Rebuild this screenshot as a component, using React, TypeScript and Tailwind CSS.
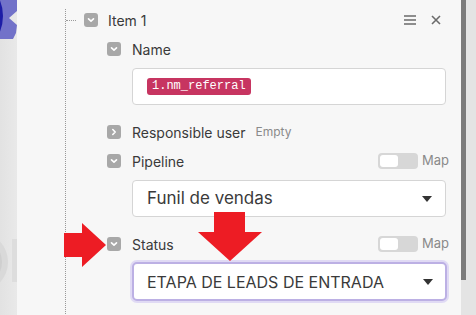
import React from "react";

const Chevron: React.FC<{ open?: boolean }> = ({ open = true }) => (
  <div className="w-[14px] h-[14px] rounded-[3px] bg-[#a8a8a8] flex items-center justify-center shrink-0">
    <svg width="8" height="8" viewBox="0 0 8 8" fill="none">
      {open ? (
        <path d="M1.5 2.8 L4 5.2 L6.5 2.8" stroke="white" strokeWidth="1.6" strokeLinecap="round" strokeLinejoin="round" />
      ) : (
        <path d="M2.8 1.5 L5.2 4 L2.8 6.5" stroke="white" strokeWidth="1.6" strokeLinecap="round" strokeLinejoin="round" />
      )}
    </svg>
  </div>
);

const MapToggle: React.FC = () => (
  <div className="ml-auto flex items-center gap-[4px]">
    <div className="w-[40px] h-[16px] rounded-[4px] bg-[#d7d7d7] p-[2px] flex">
      <div className="w-[18px] h-[12px] rounded-[3px] bg-white" />
    </div>
    <span className="text-[13px] text-[#8a8a8a] w-[24px]">Map</span>
  </div>
);

const Caret: React.FC = () => (
  <svg width="10" height="6" viewBox="0 0 10 6" className="ml-auto">
    <path d="M0 0 H10 L5 6 Z" fill="#333" />
  </svg>
);

const App: React.FC = () => {
  return (
    <div
      className="relative w-[476px] h-[315px] overflow-hidden flex bg-[#e4e4e4] text-[#3a3a3a]"
      style={{ fontFamily: "Inter, 'Noto Sans', sans-serif" }}
    >
      {/* left strip with module bubbles */}
      <div className="w-[17px] h-full bg-gradient-to-r from-[#e2e2e2] to-[#e9e9e9] shrink-0">
        <svg width="17" height="315" viewBox="0 0 17 315">
          <path d="M-40 -10 L17 -10 L17 11 L9 18 L17 25 L16 33 L13 39 L-40 39 Z" fill="#7272c9" />
          <circle cx="-40" cy="16" r="43" fill="#1d1da6" />
          <circle cx="-22" cy="262" r="30" fill="#d9d9d9" />
          <circle cx="-22" cy="262" r="24" fill="#cfcfcf" />
          <rect x="12" y="239" width="5" height="43" fill="#dddddd" />
        </svg>
      </div>

      {/* panel */}
      <div className="flex-1 h-full bg-[#f7f7f7] pl-[48px] pr-[15px]">
        <div className="mt-[9px] h-full border-l border-dotted border-[#9a9a9a]">
          {/* Item row */}
          <div className="h-[22px] flex items-center">
            <div className="w-[10px] border-t border-dotted border-[#9a9a9a]" />
            <div className="ml-[8px]">
              <Chevron />
            </div>
            <span className="ml-[10px] text-[14px]">Item 1</span>
            <div className="ml-auto flex items-center gap-[15px] pr-[5px]">
              <svg width="12" height="10" viewBox="0 0 12 10">
                <path d="M0 1 H12 M0 5 H12 M0 9 H12" stroke="#6b6b6b" strokeWidth="1.5" />
              </svg>
              <svg width="10" height="10" viewBox="0 0 10 10">
                <path d="M1 1 L9 9 M9 1 L1 9" stroke="#6b6b6b" strokeWidth="1.6" />
              </svg>
            </div>
          </div>

          <div className="pl-[41px]">
            {/* Name */}
            <div className="mt-[7px] h-[22px] flex items-center">
              <Chevron />
              <span className="ml-[11px] text-[14px]">Name</span>
            </div>
            <div className="mt-[8px] ml-[25px] h-[37px] bg-white border border-[#d5d5d5] rounded-[4px] flex items-center px-[14px]">
              <span
                className="bg-[#c73561] text-white text-[12px] leading-[17px] h-[17px] px-[5px] rounded-[3px]"
                style={{ fontFamily: "'Liberation Mono', monospace" }}
              >
                1.nm_referral
              </span>
            </div>

            {/* Responsible user */}
            <div className="mt-[16px] h-[22px] flex items-center">
              <Chevron open={false} />
              <span className="ml-[11px] text-[14px]">Responsible user</span>
              <span className="ml-[10px] text-[12px] text-[#8a8a8a]">Empty</span>
            </div>

            {/* Pipeline */}
            <div className="mt-[7px] h-[22px] flex items-center">
              <Chevron />
              <span className="ml-[11px] text-[14px]">Pipeline</span>
              <MapToggle />
            </div>
            <div className="mt-[8px] ml-[25px] h-[37px] bg-white border border-[#d5d5d5] rounded-[4px] flex items-center pl-[14px] pr-[13px]">
              <span className="text-[17px]">Funil de vendas</span>
              <Caret />
            </div>

            {/* Status */}
            <div className="mt-[16px] h-[22px] flex items-center">
              <Chevron />
              <span className="ml-[11px] text-[14px]">Status</span>
              <MapToggle />
            </div>
            <div className="mt-[7px] ml-[25px] mr-[-1px] h-[39px] bg-white border-2 border-[#bcb0e4] ring-2 ring-[#e0daf4] rounded-[5px] flex items-center pl-[13px] pr-[12px]">
              <span className="text-[16px]">ETAPA DE LEADS DE ENTRADA</span>
              <Caret />
            </div>
          </div>
        </div>
      </div>

      {/* scrollbar */}
      <div className="w-[15px] h-full flex shrink-0">
        <div className="w-[5px] h-[280px] bg-[#7b7b7b]" />
        <div className="flex-1 bg-[#e4e4e4]" />
      </div>

      {/* annotation arrows */}
      <svg className="absolute left-0 top-0 pointer-events-none" width="476" height="315" viewBox="0 0 476 315">
        <path d="M64 233 H82 V223 L106 245 L82 267 V257 H64 Z" fill="#ed1c24" />
        <path d="M214 212 H245 V232 H262 L230 261 L198 232 H214 Z" fill="#ed1c24" />
      </svg>
    </div>
  );
};

export default App;
